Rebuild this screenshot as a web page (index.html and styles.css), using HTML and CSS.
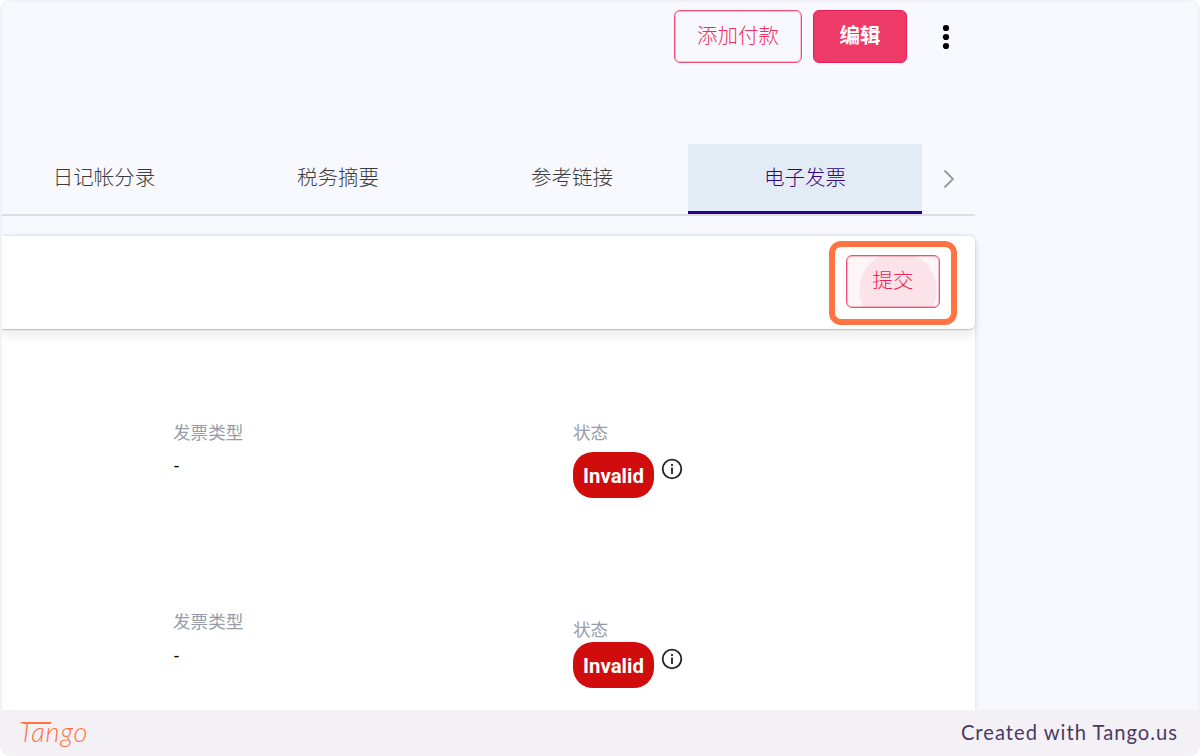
FILE: index.html
```html
<!DOCTYPE html>
<html lang="zh-CN">

<head>
  <meta charset="UTF-8">
  <title>电子发票</title>
  <link rel="stylesheet" href="styles.css">
</head>

<body>

  <div class="frame">
    <main class="page">
      <div class="actions">
        <button class="btn btn-pay">添加付款</button>
        <button class="btn btn-edit">编辑</button>
        <svg class="more" width="10" height="28" viewBox="0 0 10 28">
          <circle cx="5" cy="5" r="3.1"/>
          <circle cx="5" cy="14" r="3.1"/>
          <circle cx="5" cy="23" r="3.1"/>
        </svg>
      </div>

      <nav class="tabs">
        <div class="tab">日记帐分录</div>
        <div class="tab">税务摘要</div>
        <div class="tab">参考链接</div>
        <div class="tab active">电子发票</div>
        <svg class="next" width="12" height="20" viewBox="0 0 12 20">
          <path d="M1.5 1.5L10 10L1.5 18.5"/>
        </svg>
      </nav>

      <section class="card">
        <header class="card-header">
          <div class="highlight">
            <button class="btn btn-submit"><span>提交</span></button>
          </div>
        </header>

        <div class="row">
          <div class="field">
            <div class="label">发票类型</div>
            <div class="value">-</div>
          </div>
          <div class="field">
            <div class="label">状态</div>
            <div class="status">
              <span class="badge">Invalid</span>
              <svg class="info" width="22" height="22" viewBox="0 0 22 22">
                <circle cx="11" cy="11" r="9.3"/>
                <path d="M11 9.5V16M11 6V8"/>
              </svg>
            </div>
          </div>
        </div>

        <div class="row row-second">
          <div class="field">
            <div class="label">发票类型</div>
            <div class="value">-</div>
          </div>
          <div class="field field-status">
            <div class="label">状态</div>
            <div class="status">
              <span class="badge">Invalid</span>
              <svg class="info" width="22" height="22" viewBox="0 0 22 22">
                <circle cx="11" cy="11" r="9.3"/>
                <path d="M11 9.5V16M11 6V8"/>
              </svg>
            </div>
          </div>
        </div>
      </section>
    </main>

    <footer class="footer">
      <div class="logo">Tango</div>
      <div class="credit">Created with Tango.us</div>
    </footer>
  </div>

</body>
</html>
```

FILE: styles.css
```css
* { box-sizing: border-box; }
body { margin: 0; background: #fff; font-family: Roboto, "Noto Sans CJK SC", sans-serif; }

.frame { width: 1200px; height: 756px; background: #f3f1f6; border-radius: 10px; padding: 2px 2px 0; display: flex; flex-direction: column; overflow: hidden; }
.page { height: 708px; background: #f8f9fe; border-radius: 8px 8px 0 0; overflow: hidden; }

/* top buttons */
.actions { display: flex; height: 142px; padding: 8px 0 0 672px; align-items: flex-start; }
.btn { height: 53px; padding: 0 0 2px; border: 1px solid #ee5075; border-radius: 6px; box-shadow: inset 0 0 0 1px rgba(238,80,117,0.35); background: transparent; color: #ee2f60; font-family: inherit; font-size: 20.5px; font-weight: 300; line-height: 28px; }
.btn-pay { width: 128px; margin-right: 11px; }
.btn-edit { width: 94px; background: #ee3a67; border-color: #e61c55; box-shadow: none; color: #fff; font-weight: 700; }
.more { margin: 13px 0 0 34px; fill: #000; }

/* tabs */
.tabs { display: flex; width: 973px; height: 72px; border-bottom: 2px solid #dddee3; overflow: hidden; }
.tab { flex: none; width: 234px; height: 70px; padding: 0 0 6px 2px; display: flex; align-items: center; justify-content: center; font-size: 20.5px; font-weight: 300; color: #3c3c3c; }
.tab:first-child { margin-left: -16px; }
.tab.active { background: #e3ebf5; color: #36047f; border-bottom: 3px solid #2d0087; padding: 0 0 3px; }
.next { margin: 25px 0 0 21px; fill: none; stroke: #999; stroke-width: 1.8; }

/* invoice card */
.card { width: 973px; height: 474px; margin-top: 20px; background: #fff; border-radius: 0 6px 0 0; box-shadow: 0 0 4px rgba(0,0,0,0.15); }
.card-header { height: 93px; padding: 5px 18px 0 0; display: flex; justify-content: flex-end; background: #fff; border-radius: 0 6px 6px 0; box-shadow: 0 1px 1px rgba(0,0,0,0.2), 0 6px 12px rgba(0,0,0,0.09); }
.highlight { width: 128px; height: 84px; padding: 8px 0 0 11px; border: 6px solid #ff7442; border-radius: 12px; }
.btn-submit { width: 94px; color: #e91e55; background: radial-gradient(circle at 51px 34px, #fce2e9 38px, #fef5f7 39px); }

.row { display: flex; padding: 91px 0 0 171px; height: 189px; }
.field { width: 400px; flex: none; }
.label { font-size: 17.6px; line-height: 26px; color: #979ca8; }
.value { margin-top: 8px; padding-left: 1px; font-size: 18px; line-height: 24px; color: #000; }
.row-second .value { margin-top: 9px; }
.status { display: flex; margin-top: 6px; }
.field-status { padding-top: 8px; }
.field-status .status { margin-top: -1px; }
.badge { width: 81px; height: 46px; border-radius: 20px; background: #d10c0c; color: #fff; font-size: 20.4px; font-weight: 700; line-height: 48px; text-align: center; }
.info { margin: 6px 0 0 7px; fill: none; stroke: #222; stroke-width: 1.8; }

/* footer */
.footer { flex: 1; display: flex; justify-content: space-between; align-items: center; padding: 0 20px 3px 17px; }
.logo { position: relative; font-family: Lato, sans-serif; font-size: 27px; font-style: italic; font-weight: 300; letter-spacing: 0.9px; color: #ff7442; }
/* long crossbar of the T */
.logo::before { content: ""; position: absolute; left: 4px; top: 7px; width: 28px; height: 1.5px; background: #ff7442; }
.credit { font-family: Lato, sans-serif; font-size: 20.2px; letter-spacing: 1px; color: #4c3a62; }
```
